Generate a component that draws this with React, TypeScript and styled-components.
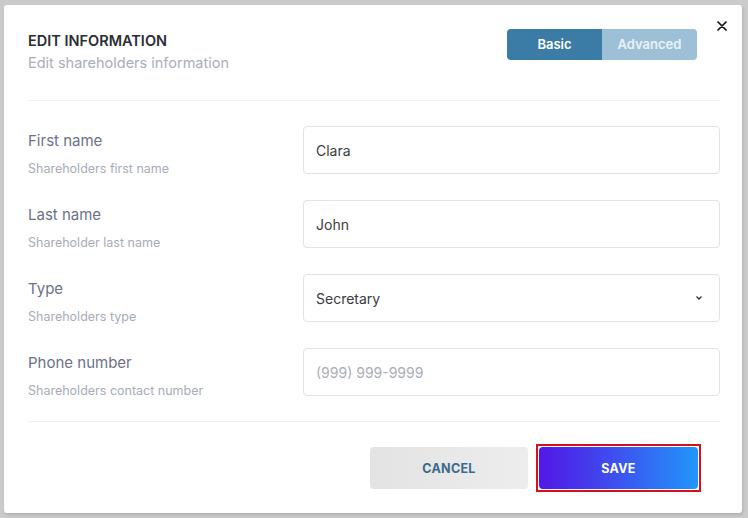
import React from 'react';
import styled, { createGlobalStyle } from 'styled-components';

const GlobalStyle = createGlobalStyle`
  * {
    box-sizing: border-box;
  }
  body {
    margin: 0;
    background: #cbcbcb;
    font-family: Inter, 'Noto Sans', Arial, sans-serif;
  }
`;

const Page = styled.div`
  width: 748px;
  height: 518px;
  padding: 5px 6px 5px 4px;
`;

const Card = styled.div`
  position: relative;
  height: 508px;
  background: #ffffff;
  border-radius: 3px;
  box-shadow: 1px 2px 3px rgba(0, 0, 0, 0.12);
  padding: 0 22px 0 24px;
`;

const CloseButton = styled.button`
  position: absolute;
  top: 14px;
  right: 13px;
  width: 14px;
  height: 14px;
  padding: 0;
  border: none;
  background: transparent;
  display: flex;
  align-items: center;
  justify-content: center;
  cursor: pointer;
`;

const Header = styled.div`
  display: flex;
  justify-content: space-between;
  align-items: flex-start;
  height: 96px;
  padding-top: 24px;
  border-bottom: 1px solid #f0f0f2;
`;

const TitleBlock = styled.div`
  display: flex;
  flex-direction: column;
  gap: 4px;
  padding-top: 2px;
`;

const Title = styled.h2`
  margin: 0;
  font-size: 14.5px;
  line-height: 19px;
  font-weight: 600;
  color: #2b2d36;
`;

const Subtitle = styled.p`
  margin: 0;
  font-size: 14.5px;
  line-height: 18px;
  color: #a9aeba;
`;

const Toggle = styled.div`
  display: flex;
  margin-right: 23px;
  border-radius: 4px;
  overflow: hidden;
`;

const ToggleOption = styled.button<{ $active?: boolean }>`
  width: 95px;
  height: 31px;
  border: none;
  padding: 0 0 2px;
  font-family: inherit;
  font-size: 13px;
  font-weight: 600;
  color: ${(p) => (p.$active ? '#ffffff' : '#eaf2f8')};
  background: ${(p) => (p.$active ? '#3a7ca5' : '#9dc0d7')};
  cursor: pointer;
`;

const Form = styled.div`
  display: flex;
  flex-direction: column;
  gap: 26px;
  padding: 25px 0 25px;
  border-bottom: 1px solid #f0f0f2;
`;

const Row = styled.div`
  display: grid;
  grid-template-columns: 275px 1fr;
  grid-template-rows: 48px;
  align-items: start;
`;

const LabelBlock = styled.div`
  display: flex;
  flex-direction: column;
  gap: 9px;
  padding-top: 5px;
`;

const Label = styled.label`
  font-size: 15px;
  line-height: 20px;
  color: #6b7189;
`;

const Hint = styled.span`
  font-size: 12.5px;
  line-height: 17px;
  color: #a7acb9;
`;

const Field = styled.div`
  height: 48px;
  border: 1px solid #e2e3e6;
  border-radius: 4px;
  display: flex;
  align-items: center;
  padding: 0 12px;
`;

const Input = styled.input`
  width: 100%;
  border: none;
  outline: none;
  padding: 0;
  background: transparent;
  font-family: inherit;
  font-size: 14px;
  color: #3a3b40;

  &::placeholder {
    color: #aaaeb6;
  }
`;

const SelectValue = styled.span`
  flex: 1;
  font-size: 14px;
  color: #3a3b40;
`;

const Chevron = styled.svg`
  margin-right: 4px;
`;

const Footer = styled.div`
  display: flex;
  justify-content: flex-end;
  align-items: center;
  gap: 8px;
  padding: 22px 19px 0 0;
`;

const CancelButton = styled.button`
  width: 158px;
  height: 42px;
  border: none;
  border-radius: 4px;
  background: linear-gradient(90deg, #e3e3e4, #ededee);
  font-family: inherit;
  font-size: 12.5px;
  font-weight: 700;
  letter-spacing: 0.3px;
  color: #3b6a8c;
  cursor: pointer;
`;

const Highlight = styled.div`
  display: flex;
  padding: 1px;
  border: 2px solid #d3111c;
`;

const SaveButton = styled.button`
  width: 159px;
  height: 42px;
  border: none;
  border-radius: 4px;
  background: linear-gradient(90deg, #5217e6, #3f4cef 45%, #2196fa);
  font-family: inherit;
  font-size: 12.5px;
  font-weight: 700;
  letter-spacing: 0.3px;
  color: #ffffff;
  cursor: pointer;
`;

const fields = [
  { label: 'First name', hint: 'Shareholders first name', value: 'Clara' },
  { label: 'Last name', hint: 'Shareholder last name', value: 'John' },
];

export default function App() {
  return (
    <Page>
      <GlobalStyle />
      <Card>
        <CloseButton aria-label="Close">
          <svg width="10" height="10" viewBox="0 0 10 10">
            <path d="M1 1 L9 9 M9 1 L1 9" stroke="#111" strokeWidth="1.7" strokeLinecap="round" />
          </svg>
        </CloseButton>
        <Header>
          <TitleBlock>
            <Title>EDIT INFORMATION</Title>
            <Subtitle>Edit shareholders information</Subtitle>
          </TitleBlock>
          <Toggle>
            <ToggleOption $active>Basic</ToggleOption>
            <ToggleOption>Advanced</ToggleOption>
          </Toggle>
        </Header>
        <Form>
          {fields.map((f) => (
            <Row key={f.label}>
              <LabelBlock>
                <Label>{f.label}</Label>
                <Hint>{f.hint}</Hint>
              </LabelBlock>
              <Field>
                <Input defaultValue={f.value} />
              </Field>
            </Row>
          ))}
          <Row>
            <LabelBlock>
              <Label>Type</Label>
              <Hint>Shareholders type</Hint>
            </LabelBlock>
            <Field>
              <SelectValue>Secretary</SelectValue>
              <Chevron width="8" height="6" viewBox="0 0 8 6">
                <path d="M1.5 1.5 L4 4 L6.5 1.5" fill="none" stroke="#333" strokeWidth="1.3" />
              </Chevron>
            </Field>
          </Row>
          <Row>
            <LabelBlock>
              <Label>Phone number</Label>
              <Hint>Shareholders contact number</Hint>
            </LabelBlock>
            <Field>
              <Input placeholder="(999) 999-9999" />
            </Field>
          </Row>
        </Form>
        <Footer>
          <CancelButton>CANCEL</CancelButton>
          <Highlight>
            <SaveButton>SAVE</SaveButton>
          </Highlight>
        </Footer>
      </Card>
    </Page>
  );
}
